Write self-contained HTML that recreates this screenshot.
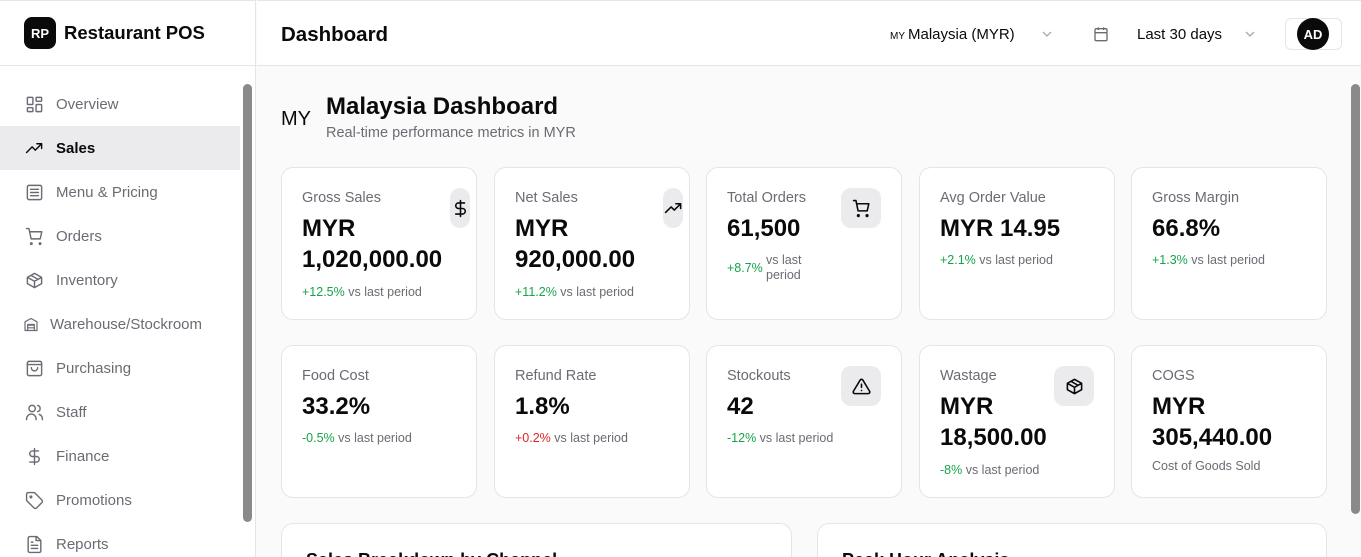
<!DOCTYPE html>
<html style="width:1361px;height:557px;overflow:hidden"><head><style>
*{box-sizing:border-box;margin:0;padding:0}
body{width:1361px;height:557px;overflow:hidden;font-family:"Liberation Sans",sans-serif;background:#fafafa;position:relative;color:#0a0a0a}
.side{position:absolute;left:0;top:0;width:256px;height:557px;background:#fff;border-right:1px solid #e5e5e5}
.logo{height:66px;border-bottom:1px solid #e5e5e5;display:flex;align-items:center;padding-left:24px;border-top:1px solid #e5e5e5}
.lb{width:32px;height:32px;background:#0a0a0a;border-radius:8px;color:#fff;font-weight:bold;font-size:13px;display:flex;align-items:center;justify-content:center;margin-right:8px}
.lt{font-size:18.5px;font-weight:bold}
.item{position:absolute;left:0;width:240px;height:44px;display:flex;align-items:center;padding-left:25px;font-size:15px;color:#6b6b73}
.item svg{width:19px;height:19px;margin-right:12px;fill:none;stroke:#6b6b73;stroke-width:1.8;stroke-linecap:round;stroke-linejoin:round}
.item.act{background:#ebebed;color:#0a0a0a;font-weight:bold}
.item.act svg{stroke:#0a0a0a}
.sb{position:absolute;left:243px;top:84px;width:9px;height:438px;background:#8a8a8a;border-radius:5px}
.hdr{position:absolute;left:257px;top:0;right:0;height:66px;background:#fff;border-bottom:1px solid #e5e5e5;border-top:1px solid #e5e5e5}
.abs{position:absolute}
.card{position:absolute;width:196px;height:153px;background:#fff;border:1px solid #e5e5e5;border-radius:12px}
.lbl{position:absolute;left:20px;top:22px;font-size:14.5px;color:#6b6b73}
.val{position:absolute;left:20px;top:45px;font-size:24px;font-weight:bold;line-height:31px}
.chg{position:absolute;left:20px;font-size:12.5px;color:#6b6b73}
.g{color:#16a34a}.r{color:#dc2626}
.ic{position:absolute;top:20px;right:20px;width:40px;height:40px;background:#ebebed;border-radius:10px;display:flex;align-items:center;justify-content:center}
.ic.n{width:20px;right:6px}
.ic svg{width:19px;height:19px;fill:none;stroke:#0a0a0a;stroke-width:2;stroke-linecap:round;stroke-linejoin:round}
.big{position:absolute;top:523px;height:34px;background:#fff;border:1px solid #e5e5e5;border-bottom:none;border-radius:12px 12px 0 0;overflow:hidden}
</style></head><body>
<div class="side">
<div class="logo"><div class="lb">RP</div><div class="lt">Restaurant POS</div></div>
<div class="item" style="top:82px"><svg viewBox="0 0 24 24"><rect x="3" y="3" width="7" height="9" rx="1"/><rect x="14" y="3" width="7" height="5" rx="1"/><rect x="14" y="12" width="7" height="9" rx="1"/><rect x="3" y="16" width="7" height="5" rx="1"/></svg>Overview</div>
<div class="item act" style="top:126px"><svg viewBox="0 0 24 24"><path d="M2 17l7-7 4 4 8-8M15 6h6v6"/></svg>Sales</div>
<div class="item" style="top:170px"><svg viewBox="0 0 24 24"><rect x="3" y="3" width="18" height="18" rx="2"/><path d="M7 8h10M7 12h10M7 16h10"/></svg>Menu &amp; Pricing</div>
<div class="item" style="top:214px"><svg viewBox="0 0 24 24"><circle cx="8" cy="21" r="1"/><circle cx="19" cy="21" r="1"/><path d="M2 2h3l2.7 13h11.5l2-9H6"/></svg>Orders</div>
<div class="item" style="top:258px"><svg viewBox="0 0 24 24"><path d="M21 8l-9-5-9 5v8l9 5 9-5z M3 8l9 5 9-5 M12 13v8 M7.5 5.5l9 5"/></svg>Inventory</div>
<div class="item" style="top:302px;padding-left:23px"><svg viewBox="0 0 24 24" style="width:16px;margin-right:11px"><path d="M3 21V8l9-5 9 5v13z M7 13h10M7 17h10M7 21v-9h10v9"/></svg>Warehouse/Stockroom</div>
<div class="item" style="top:346px"><svg viewBox="0 0 24 24"><rect x="3" y="3" width="18" height="18" rx="2"/><path d="M3 7h18M8 11a4 4 0 0 0 8 0"/></svg>Purchasing</div>
<div class="item" style="top:390px"><svg viewBox="0 0 24 24"><circle cx="9" cy="7" r="4"/><path d="M2 21v-1a6 6 0 0 1 12 0v1M16 3.1a4 4 0 0 1 0 7.8M22 21v-1a6 6 0 0 0-4-5.6"/></svg>Staff</div>
<div class="item" style="top:434px"><svg viewBox="0 0 24 24"><path d="M12 2v20M17 5H9.5a3.5 3.5 0 0 0 0 7h5a3.5 3.5 0 0 1 0 7H6"/></svg>Finance</div>
<div class="item" style="top:478px"><svg viewBox="0 0 24 24"><path d="M12.6 2.6A2 2 0 0 0 11.2 2H4a2 2 0 0 0-2 2v7.2a2 2 0 0 0 .6 1.4l8.7 8.7a2.4 2.4 0 0 0 3.4 0l6.6-6.6a2.4 2.4 0 0 0 0-3.4z"/><circle cx="7.5" cy="7.5" r="1"/></svg>Promotions</div>
<div class="item" style="top:522px"><svg viewBox="0 0 24 24"><path d="M15 2H6a2 2 0 0 0-2 2v16a2 2 0 0 0 2 2h12a2 2 0 0 0 2-2V7z M14 2v5h6 M8 13h8M8 17h8M8 9h2"/></svg>Reports</div>
<div class="sb"></div>
</div>
<div class="hdr">
<div class="abs" style="left:24px;top:22px;font-size:20.5px;font-weight:bold">Dashboard</div>
<div class="abs" style="left:633px;top:30px;font-size:10px">MY</div>
<div class="abs" style="left:651px;top:25px;font-size:15px">Malaysia (MYR)</div>
<svg class="abs" style="left:784px;top:29px" width="12" height="8" viewBox="0 0 12 8"><path d="M2 2l4 4 4-4" fill="none" stroke="#aaa" stroke-width="1.3"/></svg>
<svg class="abs" style="left:836px;top:25px" width="16" height="16" viewBox="0 0 24 24" fill="none" stroke="#6b6b73" stroke-width="2"><rect x="3" y="4" width="18" height="18" rx="2"/><path d="M16 2v4M8 2v4M3 10h18"/></svg>
<div class="abs" style="left:880px;top:25px;font-size:15px">Last 30 days</div>
<svg class="abs" style="left:987px;top:29px" width="12" height="8" viewBox="0 0 12 8"><path d="M2 2l4 4 4-4" fill="none" stroke="#aaa" stroke-width="1.3"/></svg>
<div class="abs" style="left:1028px;top:17px;width:57px;height:32px;border:1px solid #e5e5e5;border-radius:6px"></div>
<div class="abs" style="left:1040px;top:17px;width:32px;height:32px;border-radius:50%;background:#0a0a0a;color:#fff;font-weight:bold;font-size:13px;display:flex;align-items:center;justify-content:center">AD</div>
</div>
<div class="abs" style="left:1351px;top:84px;width:9px;height:430px;background:#8a8a8a;border-radius:5px"></div>
<div class="abs" style="left:281px;top:108px;font-size:20px">MY</div>
<div class="abs" style="left:326px;top:93px;font-size:24px;font-weight:bold">Malaysia Dashboard</div>
<div class="abs" style="left:326px;top:125px;font-size:14.5px;color:#6b6b73">Real-time performance metrics in MYR</div>

<div class="card" style="left:281px;top:167px"><div class="lbl">Gross Sales</div><div class="val">MYR<br>1,020,000.00</div><div class="chg" style="top:117px"><span class="g">+12.5%</span> vs last period</div><div class="ic n"><svg viewBox="0 0 24 24"><path d="M12 2v20M17 5H9.5a3.5 3.5 0 0 0 0 7h5a3.5 3.5 0 0 1 0 7H6"/></svg></div></div>
<div class="card" style="left:494px;top:167px"><div class="lbl">Net Sales</div><div class="val">MYR<br>920,000.00</div><div class="chg" style="top:117px"><span class="g">+11.2%</span> vs last period</div><div class="ic n"><svg viewBox="0 0 24 24"><path d="M2 17l7-7 4 4 8-8M15 6h6v6"/></svg></div></div>
<div class="card" style="left:706px;top:167px"><div class="lbl">Total Orders</div><div class="val">61,500</div><div class="chg" style="top:93px"><span class="g">+8.7%</span></div><div class="chg" style="left:59px;top:85px;line-height:15px">vs last<br>period</div><div class="ic"><svg viewBox="0 0 24 24"><circle cx="8" cy="21" r="1"/><circle cx="19" cy="21" r="1"/><path d="M2 2h3l2.7 13h11.5l2-9H6"/></svg></div></div>
<div class="card" style="left:919px;top:167px"><div class="lbl">Avg Order Value</div><div class="val">MYR 14.95</div><div class="chg" style="top:85px"><span class="g">+2.1%</span> vs last period</div></div>
<div class="card" style="left:1131px;top:167px"><div class="lbl">Gross Margin</div><div class="val">66.8%</div><div class="chg" style="top:85px"><span class="g">+1.3%</span> vs last period</div></div>

<div class="card" style="left:281px;top:345px"><div class="lbl">Food Cost</div><div class="val">33.2%</div><div class="chg" style="top:85px"><span class="g">-0.5%</span> vs last period</div></div>
<div class="card" style="left:494px;top:345px"><div class="lbl">Refund Rate</div><div class="val">1.8%</div><div class="chg" style="top:85px"><span class="r">+0.2%</span> vs last period</div></div>
<div class="card" style="left:706px;top:345px"><div class="lbl">Stockouts</div><div class="val">42</div><div class="chg" style="top:85px"><span class="g">-12%</span> vs last period</div><div class="ic"><svg viewBox="0 0 24 24"><path d="M10.3 3.9L1.8 18a2 2 0 0 0 1.7 3h17a2 2 0 0 0 1.7-3L13.7 3.9a2 2 0 0 0-3.4 0zM12 9v4M12 17h.01"/></svg></div></div>
<div class="card" style="left:919px;top:345px"><div class="lbl">Wastage</div><div class="val">MYR<br>18,500.00</div><div class="chg" style="top:117px"><span class="g">-8%</span> vs last period</div><div class="ic"><svg viewBox="0 0 24 24"><path d="M21 8l-9-5-9 5v8l9 5 9-5z M3 8l9 5 9-5 M12 13v8 M7.5 5.5l9 5"/></svg></div></div>
<div class="card" style="left:1131px;top:345px"><div class="lbl">COGS</div><div class="val">MYR<br>305,440.00</div><div class="chg" style="top:113px">Cost of Goods Sold</div></div>

<div class="big" style="left:281px;width:511px"><div class="abs" style="left:24px;top:26px;font-size:18px;font-weight:bold">Sales Breakdown by Channel</div></div>
<div class="big" style="left:817px;width:510px"><div class="abs" style="left:24px;top:26px;font-size:18px;font-weight:bold">Peak Hour Analysis</div></div>
</body></html>
